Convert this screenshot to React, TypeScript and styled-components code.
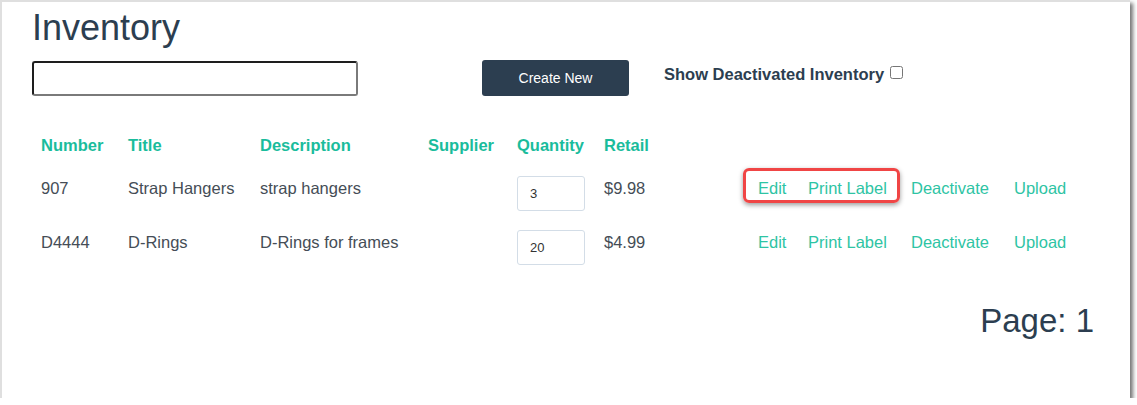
import React from "react";
import styled, { createGlobalStyle } from "styled-components";

const GlobalStyle = createGlobalStyle`
  html, body {
    margin: 0;
    padding: 0;
    background: #ffffff;
  }
  body {
    font-family: "Liberation Sans", Arial, sans-serif;
    color: #454d56;
  }
`;

type Item = {
  number: string;
  title: string;
  description: string;
  supplier: string;
  quantity: number;
  retail: string;
};

const items: Item[] = [
  { number: "907", title: "Strap Hangers", description: "strap hangers", supplier: "", quantity: 3, retail: "$9.98" },
  { number: "D4444", title: "D-Rings", description: "D-Rings for frames", supplier: "", quantity: 20, retail: "$4.99" },
];

const columns = [
  { label: "Number", width: 87 },
  { label: "Title", width: 132 },
  { label: "Description", width: 168 },
  { label: "Supplier", width: 89 },
  { label: "Quantity", width: 87 },
  { label: "Retail", width: 154 },
  { label: "", width: 50 },
  { label: "", width: 103 },
  { label: "", width: 103 },
  { label: "", width: 76 },
];

const tableWidth = columns.reduce((sum, c) => sum + c.width, 0);

const Panel = styled.main`
  box-sizing: border-box;
  width: 1130px;
  height: 398px;
  border-top: 2px solid #dfdfdf;
  border-left: 2px solid #dfdfdf;
  box-shadow: 3px 3px 4px rgba(0, 0, 0, 0.55);
  background: #fff;
  padding: 8px 36px 0 30px;
  display: flex;
  flex-direction: column;
`;

const Heading = styled.h1`
  margin: 0;
  font-size: 36px;
  line-height: 36px;
  font-weight: 400;
  color: #2c3e50;
`;

const Toolbar = styled.div`
  display: flex;
  align-items: flex-start;
  margin-top: 14px;
`;

const SearchInput = styled.input`
  box-sizing: border-box;
  width: 326px;
  height: 35px;
  margin: 1px 124px 0 0;
  border: 2px solid;
  border-color: #1e1e1e #7a7a7a #7a7a7a #1e1e1e;
  border-radius: 3px;
  background: #fff;
`;

const CreateButton = styled.button`
  box-sizing: border-box;
  width: 147px;
  height: 36px;
  border: none;
  border-radius: 3px;
  background: #2c3e50;
  color: #fff;
  font-family: "Liberation Sans", Arial, sans-serif;
  font-size: 14px;
  cursor: pointer;
`;

const ToggleLabel = styled.label`
  display: flex;
  align-items: center;
  margin: 3px 0 0 35px;
  font-size: 16.5px;
  line-height: 22px;
  font-weight: 700;
  color: #2c3e50;

  input {
    width: 13px;
    height: 13px;
    margin: 0 0 4px 6px;
  }
`;

const Table = styled.table`
  width: ${tableWidth}px;
  margin: 29px 0 0 1px;
  border-collapse: collapse;
  table-layout: fixed;
`;

const HeadCell = styled.th`
  padding: 8px 8px;
  height: 41px;
  box-sizing: border-box;
  text-align: left;
  font-size: 16.5px;
  line-height: 25px;
  font-weight: 700;
  color: #1abc9c;
  vertical-align: middle;
  white-space: nowrap;
`;

const Cell = styled.td<{ $input?: boolean }>`
  position: relative;
  height: 54px;
  box-sizing: border-box;
  padding: ${(p) => (p.$input ? "10px 8px 0" : "12px 8px 0")};
  vertical-align: top;
  font-size: 16.5px;
  line-height: 20px;
  color: #454d56;
  white-space: nowrap;
`;

const QtyInput = styled.input`
  box-sizing: border-box;
  width: 68px;
  height: 35px;
  padding: 0 0 0 12px;
  border: 1px solid #d3dde7;
  border-radius: 3px;
  font-family: "Liberation Sans", Arial, sans-serif;
  font-size: 13px;
  color: #333;
`;

const ActionLink = styled.a`
  color: #2ec4a4;
  text-decoration: none;
  cursor: pointer;
`;

const Highlight = styled.span`
  position: absolute;
  left: -7px;
  top: 2px;
  width: 157px;
  height: 35px;
  box-sizing: border-box;
  border: 3.5px solid #f04545;
  border-radius: 6px;
  box-shadow: 0 2px 5px rgba(0, 0, 0, 0.4);
  pointer-events: none;
`;

const Pager = styled.div`
  margin-top: 30px;
  text-align: right;
  font-size: 33px;
  line-height: 33px;
  color: #2c3e50;
`;

export default function App() {
  return (
    <>
      <GlobalStyle />
      <Panel>
        <Heading>Inventory</Heading>
        <Toolbar>
          <SearchInput type="text" />
          <CreateButton>Create New</CreateButton>
          <ToggleLabel>
            Show Deactivated Inventory
            <input type="checkbox" />
          </ToggleLabel>
        </Toolbar>
        <Table>
          <colgroup>
            {columns.map((c, i) => (
              <col key={i} style={{ width: c.width }} />
            ))}
          </colgroup>
          <thead>
            <tr>
              {columns.map((c, i) => (
                <HeadCell key={i}>{c.label}</HeadCell>
              ))}
            </tr>
          </thead>
          <tbody>
            {items.map((item, row) => (
              <tr key={item.number}>
                <Cell>{item.number}</Cell>
                <Cell>{item.title}</Cell>
                <Cell>{item.description}</Cell>
                <Cell>{item.supplier}</Cell>
                <Cell $input>
                  <QtyInput type="text" defaultValue={item.quantity} />
                </Cell>
                <Cell>{item.retail}</Cell>
                <Cell>
                  {row === 0 && <Highlight />}
                  <ActionLink>Edit</ActionLink>
                </Cell>
                <Cell>
                  <ActionLink>Print Label</ActionLink>
                </Cell>
                <Cell>
                  <ActionLink>Deactivate</ActionLink>
                </Cell>
                <Cell>
                  <ActionLink>Upload</ActionLink>
                </Cell>
              </tr>
            ))}
          </tbody>
        </Table>
        <Pager>Page: 1</Pager>
      </Panel>
    </>
  );
}
